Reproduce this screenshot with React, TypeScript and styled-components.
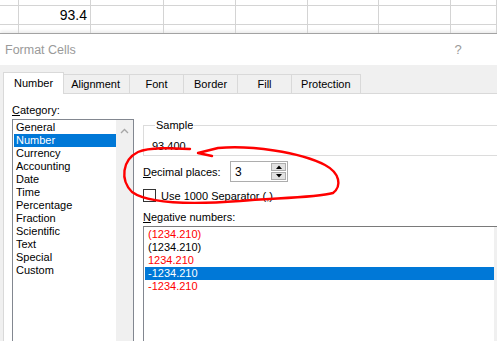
import React from "react";
import styled, { createGlobalStyle } from "styled-components";

const GlobalStyle = createGlobalStyle`
  html, body { margin: 0; padding: 0; background: #ffffff; overflow: hidden; }
  #root { width: 497px; height: 341px; overflow: hidden; }
`;

const Screen = styled.div`
  position: relative;
  width: 497px;
  height: 341px;
  overflow: hidden;
  font-family: "Liberation Sans", Arial, sans-serif;
  font-size: 11px;
  color: #000;
`;

const Sheet = styled.div`
  display: grid;
  grid-template-columns: 19px 72px 73px 72px 72px 71px 72px 1fr;
  grid-template-rows: 6px 19px 8px;
  background: #fff;
`;

const Cell = styled.div<{ $last?: boolean }>`
  box-sizing: border-box;
  border-right: 1px solid #d4d4d4;
  border-bottom: ${(p) => (p.$last ? "none" : "1px solid #d4d4d4")};
  font-size: 14px;
  line-height: 18px;
  text-align: right;
  padding-right: 3px;
  color: #000;
`;

const Dialog = styled.div`
  width: 527px;
  border-top: 1px solid #a3a3a3;
  box-shadow: 0 -2px 3px rgba(0, 0, 0, 0.08);
  background: #f0f0f0;
`;

const TitleBar = styled.div`
  height: 31px;
  background: #ffffff;
  display: flex;
  align-items: center;
  padding-left: 5px;
`;

const Title = styled.div`
  flex: 1;
  font-size: 12.5px;
  color: #9a9a9a;
`;

const CaptionButton = styled.div`
  width: 46px;
  text-align: center;
  font-size: 13px;
  color: #9a9a9a;
`;

const Body = styled.div`
  padding: 7px 3px 0 3px;
`;

const TabRow = styled.div`
  display: flex;
  align-items: flex-end;
  height: 21px;
  padding-left: 2px;
`;

const Tab = styled.div<{ $active?: boolean }>`
  position: relative;
  box-sizing: border-box;
  min-width: 54px;
  display: flex;
  align-items: center;
  justify-content: center;
  border: 1px solid #d9d9d9;
  border-left-width: ${(p) => (p.$active ? "1px" : "0")};
  border-bottom: none;
  background: ${(p) => (p.$active ? "#ffffff" : "#f0f0f0")};
  height: ${(p) => (p.$active ? "22px" : "19px")};
  margin: ${(p) => (p.$active ? "0 -2px -1px -2px" : "0")};
  padding: ${(p) => (p.$active ? "0 10px 2px 10px" : "0 9px")};
  z-index: ${(p) => (p.$active ? 1 : 0)};
  &:first-child { border-left-width: 1px; }
`;

const Page = styled.div`
  background: #ffffff;
  border: 1px solid #d9d9d9;
  height: 260px;
  display: flex;
  padding: 9px 11px 0 8px;
`;

const LeftCol = styled.div`
  width: 122px;
  display: flex;
  flex-direction: column;
`;

const Label = styled.div<{ $mt?: number }>`
  line-height: 14px;
  margin-top: ${(p) => p.$mt ?? 0}px;
  margin-bottom: 2px;
  white-space: nowrap;
`;

const Acc = styled.span`
  text-decoration: underline;
  text-underline-offset: 1px;
`;

const ListBox = styled.div`
  flex: 1;
  display: flex;
  border: 1px solid #828790;
  background: #fff;
`;

const Items = styled.div`
  flex: 1;
  padding: 1px 0 0 1px;
`;

const Item = styled.div<{ $sel?: boolean; $red?: boolean }>`
  height: 13px;
  line-height: 13px;
  padding-left: 2px;
  white-space: nowrap;
  background: ${(p) => (p.$sel ? "#0078d7" : "transparent")};
  color: ${(p) => (p.$sel ? "#ffffff" : p.$red ? "#ff0000" : "#000000")};
`;

const NegItem = styled(Item)`
  padding-left: 3px;
`;

const ScrollBar = styled.div`
  width: 17px;
  background: #f0f0f0;
  display: flex;
  justify-content: center;
  padding-top: 8px;
  box-sizing: border-box;
`;

const RightCol = styled.div`
  flex: 1;
  margin-left: 9px;
  margin-top: 15px;
  display: flex;
  flex-direction: column;
`;

const Group = styled.fieldset`
  margin: 0;
  padding: 7px 8px 2px 8px;
  border: 1px solid #dcdcdc;
  border-right: none;
  min-width: 0;
`;

const Legend = styled.legend`
  padding: 0 1px;
  margin-left: 3px;
  line-height: 14px;
`;

const SampleValue = styled.div`
  line-height: 14px;
`;

const Row = styled.div<{ $mt: number }>`
  display: flex;
  align-items: center;
  margin-top: ${(p) => p.$mt}px;
  white-space: nowrap;
`;

const FieldLabel = styled.div`
  width: 87px;
`;

const SpinBox = styled.div`
  box-sizing: border-box;
  width: 58px;
  height: 21px;
  border: 1px solid #adadad;
  display: flex;
  align-items: center;
  padding: 0 1px 0 4px;
`;

const SpinValue = styled.div`
  flex: 1;
  font-size: 12px;
`;

const SpinButtons = styled.div`
  display: flex;
  flex-direction: column;
  gap: 1px;
`;

const SpinButton = styled.div`
  box-sizing: border-box;
  width: 15px;
  height: 8px;
  background: #e1e1e1;
  border: 1px solid #adadad;
  display: flex;
  align-items: center;
  justify-content: center;
`;

const CheckBox = styled.div`
  box-sizing: border-box;
  width: 13px;
  height: 13px;
  border: 1px solid #333333;
  margin-right: 5px;
  background: #fff;
`;

const NegList = styled(ListBox)`
  height: 140px;
  flex: none;
  border-top-color: #7a7a7a;
`;

const Overlay = styled.svg`
  position: absolute;
  top: 0;
  left: 0;
  pointer-events: none;
`;

const cols = 8;
const tabs = ["Number", "Alignment", "Font", "Border", "Fill", "Protection"];
const categories = [
  "General",
  "Number",
  "Currency",
  "Accounting",
  "Date",
  "Time",
  "Percentage",
  "Fraction",
  "Scientific",
  "Text",
  "Special",
  "Custom",
];
const negatives = [
  { t: "(1234.210)", red: true },
  { t: "(1234.210)", red: false },
  { t: "1234.210", red: true },
  { t: "-1234.210", red: false, sel: true },
  { t: "-1234.210", red: true },
];

export default function App() {
  const sheetCells = [];
  for (let r = 0; r < 3; r++) {
    for (let c = 0; c < cols; c++) {
      sheetCells.push(
        <Cell key={`${r}-${c}`} $last={r === 2}>
          {r === 1 && c === 1 ? "93.4" : ""}
        </Cell>
      );
    }
  }
  return (
    <Screen>
      <GlobalStyle />
      <Sheet>{sheetCells}</Sheet>
      <Dialog>
        <TitleBar>
          <Title>Format Cells</Title>
          <CaptionButton>?</CaptionButton>
          <CaptionButton />
        </TitleBar>
        <Body>
          <TabRow>
            {tabs.map((t, i) => (
              <Tab key={t} $active={i === 0}>
                {t}
              </Tab>
            ))}
          </TabRow>
          <Page>
            <LeftCol>
              <Label>
                <Acc>C</Acc>ategory:
              </Label>
              <ListBox>
                <Items>
                  {categories.map((c) => (
                    <Item key={c} $sel={c === "Number"}>
                      {c}
                    </Item>
                  ))}
                </Items>
                <ScrollBar>
                  <svg width="9" height="6" viewBox="0 0 9 6">
                    <path d="M1 5 L4.5 1.5 L8 5" fill="none" stroke="#a6a6a6" strokeWidth="1.3" />
                  </svg>
                </ScrollBar>
              </ListBox>
            </LeftCol>
            <RightCol>
              <Group>
                <Legend>Sample</Legend>
                <SampleValue>93.400</SampleValue>
              </Group>
              <Row $mt={5}>
                <FieldLabel>
                  <Acc>D</Acc>ecimal places:
                </FieldLabel>
                <SpinBox>
                  <SpinValue>3</SpinValue>
                  <SpinButtons>
                    <SpinButton>
                      <svg width="6" height="4" viewBox="0 0 6 4">
                        <path d="M0 4 L3 0.5 L6 4 Z" fill="#000" />
                      </svg>
                    </SpinButton>
                    <SpinButton>
                      <svg width="6" height="4" viewBox="0 0 6 4">
                        <path d="M0 0 L3 3.5 L6 0 Z" fill="#000" />
                      </svg>
                    </SpinButton>
                  </SpinButtons>
                </SpinBox>
              </Row>
              <Row $mt={7}>
                <CheckBox />
                <span>
                  <Acc>U</Acc>se 1000 Separator (,)
                </span>
              </Row>
              <Label $mt={8}>
                <Acc>N</Acc>egative numbers:
              </Label>
              <NegList>
                <Items>
                  {negatives.map((n, i) => (
                    <NegItem key={i} $red={n.red} $sel={n.sel}>
                      {n.t}
                    </NegItem>
                  ))}
                </Items>
                <ScrollBar />
              </NegList>
            </RightCol>
          </Page>
        </Body>
      </Dialog>
      <Overlay width="497" height="341" viewBox="0 0 497 341">
        <path
          d="M212 156 L198 153 L218 148 C250 145 300 152 325 165 C340 173 342 186 333 193 C315 198 270 198 240 201 C200 204 150 205 132 192 C120 180 122 160 138 152 C150 147 170 148 190 149"
          fill="none"
          stroke="#ff0000"
          strokeWidth="2.4"
          strokeLinecap="round"
          strokeLinejoin="round"
        />
      </Overlay>
    </Screen>
  );
}
